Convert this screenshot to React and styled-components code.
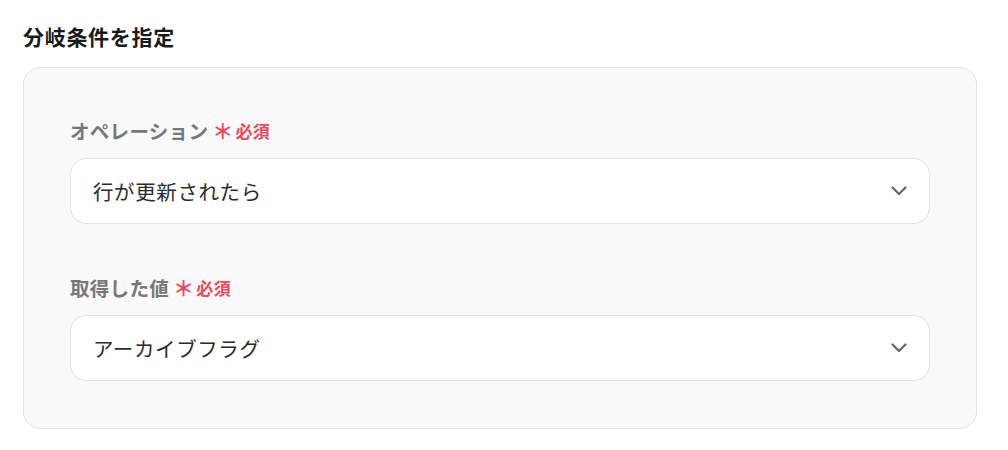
import React from "react";
import styled, { createGlobalStyle } from "styled-components";

const Global = createGlobalStyle`
  html, body { margin: 0; padding: 0; background: #ffffff; }
  body { font-family: "Noto Sans CJK JP", "Noto Sans", sans-serif; }
`;

const Page = styled.div`
  width: 1008px;
  padding: 21px 0 0 23px;
  box-sizing: border-box;
`;

const Title = styled.h2`
  margin: 0 0 16px;
  font-size: 21px;
  line-height: 30px;
  font-weight: 600;
  letter-spacing: 0.7px;
  color: #1a1a1a;
`;

const Panel = styled.div`
  width: 954px;
  box-sizing: border-box;
  border: 1px solid #e4e4e4;
  border-radius: 17px;
  background: #f9f9f9;
  padding: 49px 46px 47px;
  display: flex;
  flex-direction: column;
  gap: 50px;
`;

const Field = styled.div`
  display: flex;
  flex-direction: column;
  gap: 15px;
`;

const Label = styled.div`
  display: flex;
  align-items: center;
  gap: 4px;
  height: 26px;
  font-size: 19.5px;
  font-weight: 700;
  letter-spacing: 0.3px;
  color: #777777;
`;

const Required = styled.span`
  display: flex;
  align-items: center;
  gap: 2px;
  color: #f0475e;
  font-size: 17px;
  font-weight: 700;
  letter-spacing: 0.3px;
`;

const Star = styled.span`
  font-size: 21px;
  font-weight: 700;
  line-height: 1;
`;

const Select = styled.div`
  height: 66px;
  box-sizing: border-box;
  border: 1px solid #e2e2e2;
  border-radius: 16px;
  background: #ffffff;
  display: flex;
  align-items: center;
  justify-content: space-between;
  padding: 0 22px;
  font-size: 20.5px;
  letter-spacing: 0.6px;
  color: #2b2b2b;
`;

const Chevron = () => (
  <svg width="16" height="10" viewBox="0 0 16 10" fill="none">
    <path d="M1.5 1.5 L8 8 L14.5 1.5" stroke="#666" strokeWidth="2.2" strokeLinecap="round" strokeLinejoin="round" />
  </svg>
);

const fields = [
  { label: "オペレーション", value: "行が更新されたら" },
  { label: "取得した値", value: "アーカイブフラグ" },
];

export default function App() {
  return (
    <Page>
      <Global />
      <Title>分岐条件を指定</Title>
      <Panel>
        {fields.map((f) => (
          <Field key={f.label}>
            <Label>
              {f.label}
              <Required>
                <Star>＊</Star>必須
              </Required>
            </Label>
            <Select>
              <span>{f.value}</span>
              <Chevron />
            </Select>
          </Field>
        ))}
      </Panel>
    </Page>
  );
}
